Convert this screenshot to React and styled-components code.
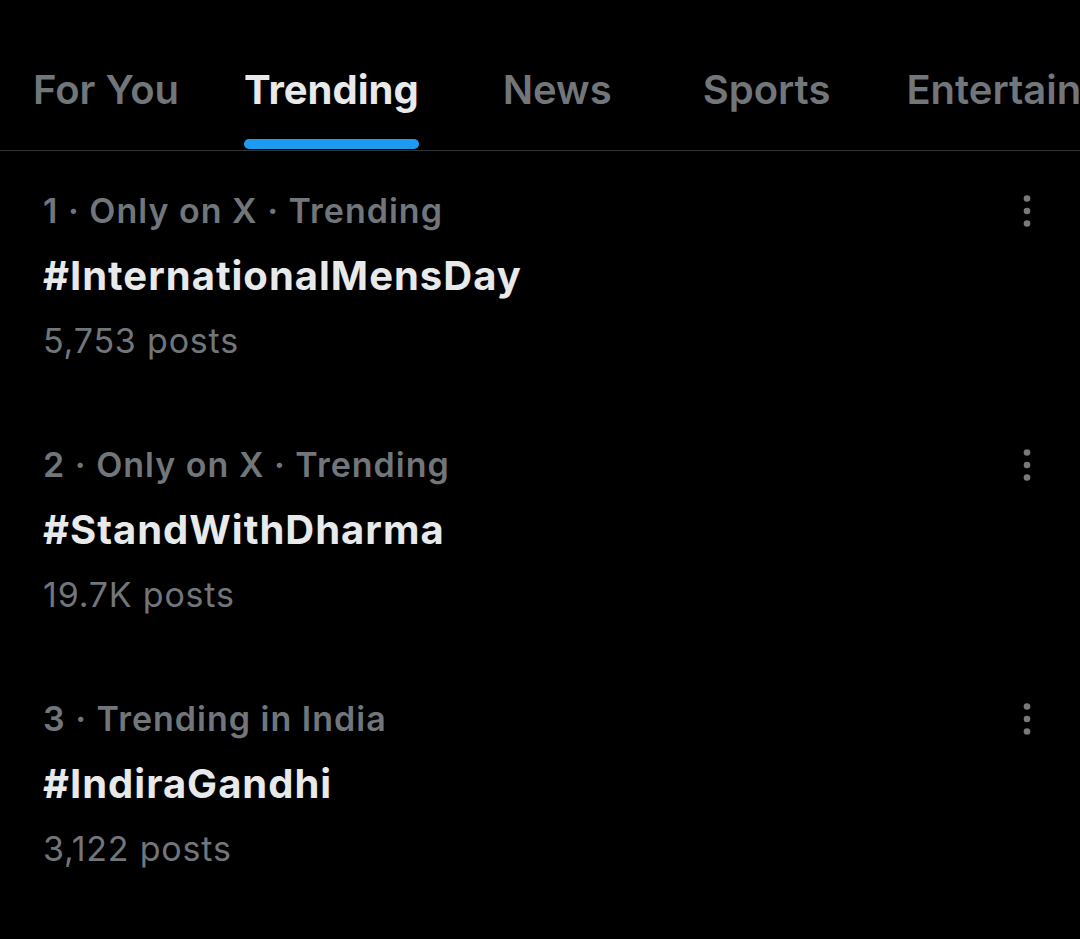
import React from 'react';
import styled, { createGlobalStyle } from 'styled-components';

const GlobalStyle = createGlobalStyle`
  body {
    margin: 0;
    background: #000;
    font-family: Inter, 'Noto Sans', sans-serif;
  }
`;

// space = distance to the next tab
const tabs = [
  { label: 'For You', space: 65 },
  { label: 'Trending', space: 84 },
  { label: 'News', space: 91 },
  { label: 'Sports', space: 76 },
  { label: 'Entertainment', space: 0 },
];

const trends = [
  { meta: '1 · Only on X · Trending', tag: '#InternationalMensDay', posts: '5,753 posts' },
  { meta: '2 · Only on X · Trending', tag: '#StandWithDharma', posts: '19.7K posts' },
  { meta: '3 · Trending in India', tag: '#IndiraGandhi', posts: '3,122 posts' },
];

const Kebab = () => (
  <svg width="10" height="36" viewBox="0 0 10 36">
    <circle cx="5" cy="5.5" r="3.3" fill="#77797d" />
    <circle cx="5" cy="18" r="3.3" fill="#77797d" />
    <circle cx="5" cy="30.5" r="3.3" fill="#77797d" />
  </svg>
);

const App = () => {
  const active = 1;
  return (
    <Page>
      <GlobalStyle />
      <TabBar>
        {tabs.map((t, i) => (
          <Tab key={t.label} space={t.space}>
            <TabLabel active={i === active}>{t.label}</TabLabel>
            <Indicator active={i === active} />
          </Tab>
        ))}
      </TabBar>
      <List>
        {trends.map((t) => (
          <Trend key={t.tag}>
            <TopLine>
              <Meta>{t.meta}</Meta>
              <More><Kebab /></More>
            </TopLine>
            <Tag>{t.tag}</Tag>
            <Posts>{t.posts}</Posts>
          </Trend>
        ))}
      </List>
    </Page>
  );
};

const Page = styled.div`
  width: 1080px;
  height: 939px;
  overflow: hidden;
  background: #000;
`;

const TabBar = styled.div`
  display: flex;
  height: 150px;
  padding-left: 33px;
  border-bottom: 1px solid #2f3336;
  overflow: hidden;
  white-space: nowrap;
`;

const Tab = styled.div`
  display: flex;
  flex-direction: column;
  justify-content: flex-end;
  flex-shrink: 0;
  margin-right: ${(p) => p.space}px;
`;

const TabLabel = styled.div`
  font-size: 40px;
  line-height: 48px;
  font-weight: ${(p) => (p.active ? 700 : 600)};
  color: ${(p) => (p.active ? '#e7e9ea' : '#71767b')};
`;

const Indicator = styled.div`
  height: 10px;
  margin-top: 25px;
  margin-bottom: 1px;
  border-radius: 5px;
  background: ${(p) => (p.active ? '#1d9bf0' : 'transparent')};
`;

const List = styled.div`
  display: flex;
  flex-direction: column;
`;

const Trend = styled.div`
  display: flex;
  flex-direction: column;
  padding: 38px 48px 42px 43px;
`;

const TopLine = styled.div`
  display: flex;
  justify-content: space-between;
  align-items: center;
`;

const Meta = styled.div`
  font-size: 34px;
  line-height: 44px;
  font-weight: 600;
  color: #71767b;
  letter-spacing: 1px;
`;

const More = styled.div`
  display: flex;
  align-items: center;
`;

const Tag = styled.div`
  margin-top: 15px;
  font-size: 40px;
  line-height: 56px;
  font-weight: 700;
  color: #e7e9ea;
  letter-spacing: 1px;
`;

const Posts = styled.div`
  margin-top: 15px;
  font-size: 34px;
  line-height: 44px;
  font-weight: 400;
  color: #71767b;
  letter-spacing: 0.8px;
`;

export default App;
